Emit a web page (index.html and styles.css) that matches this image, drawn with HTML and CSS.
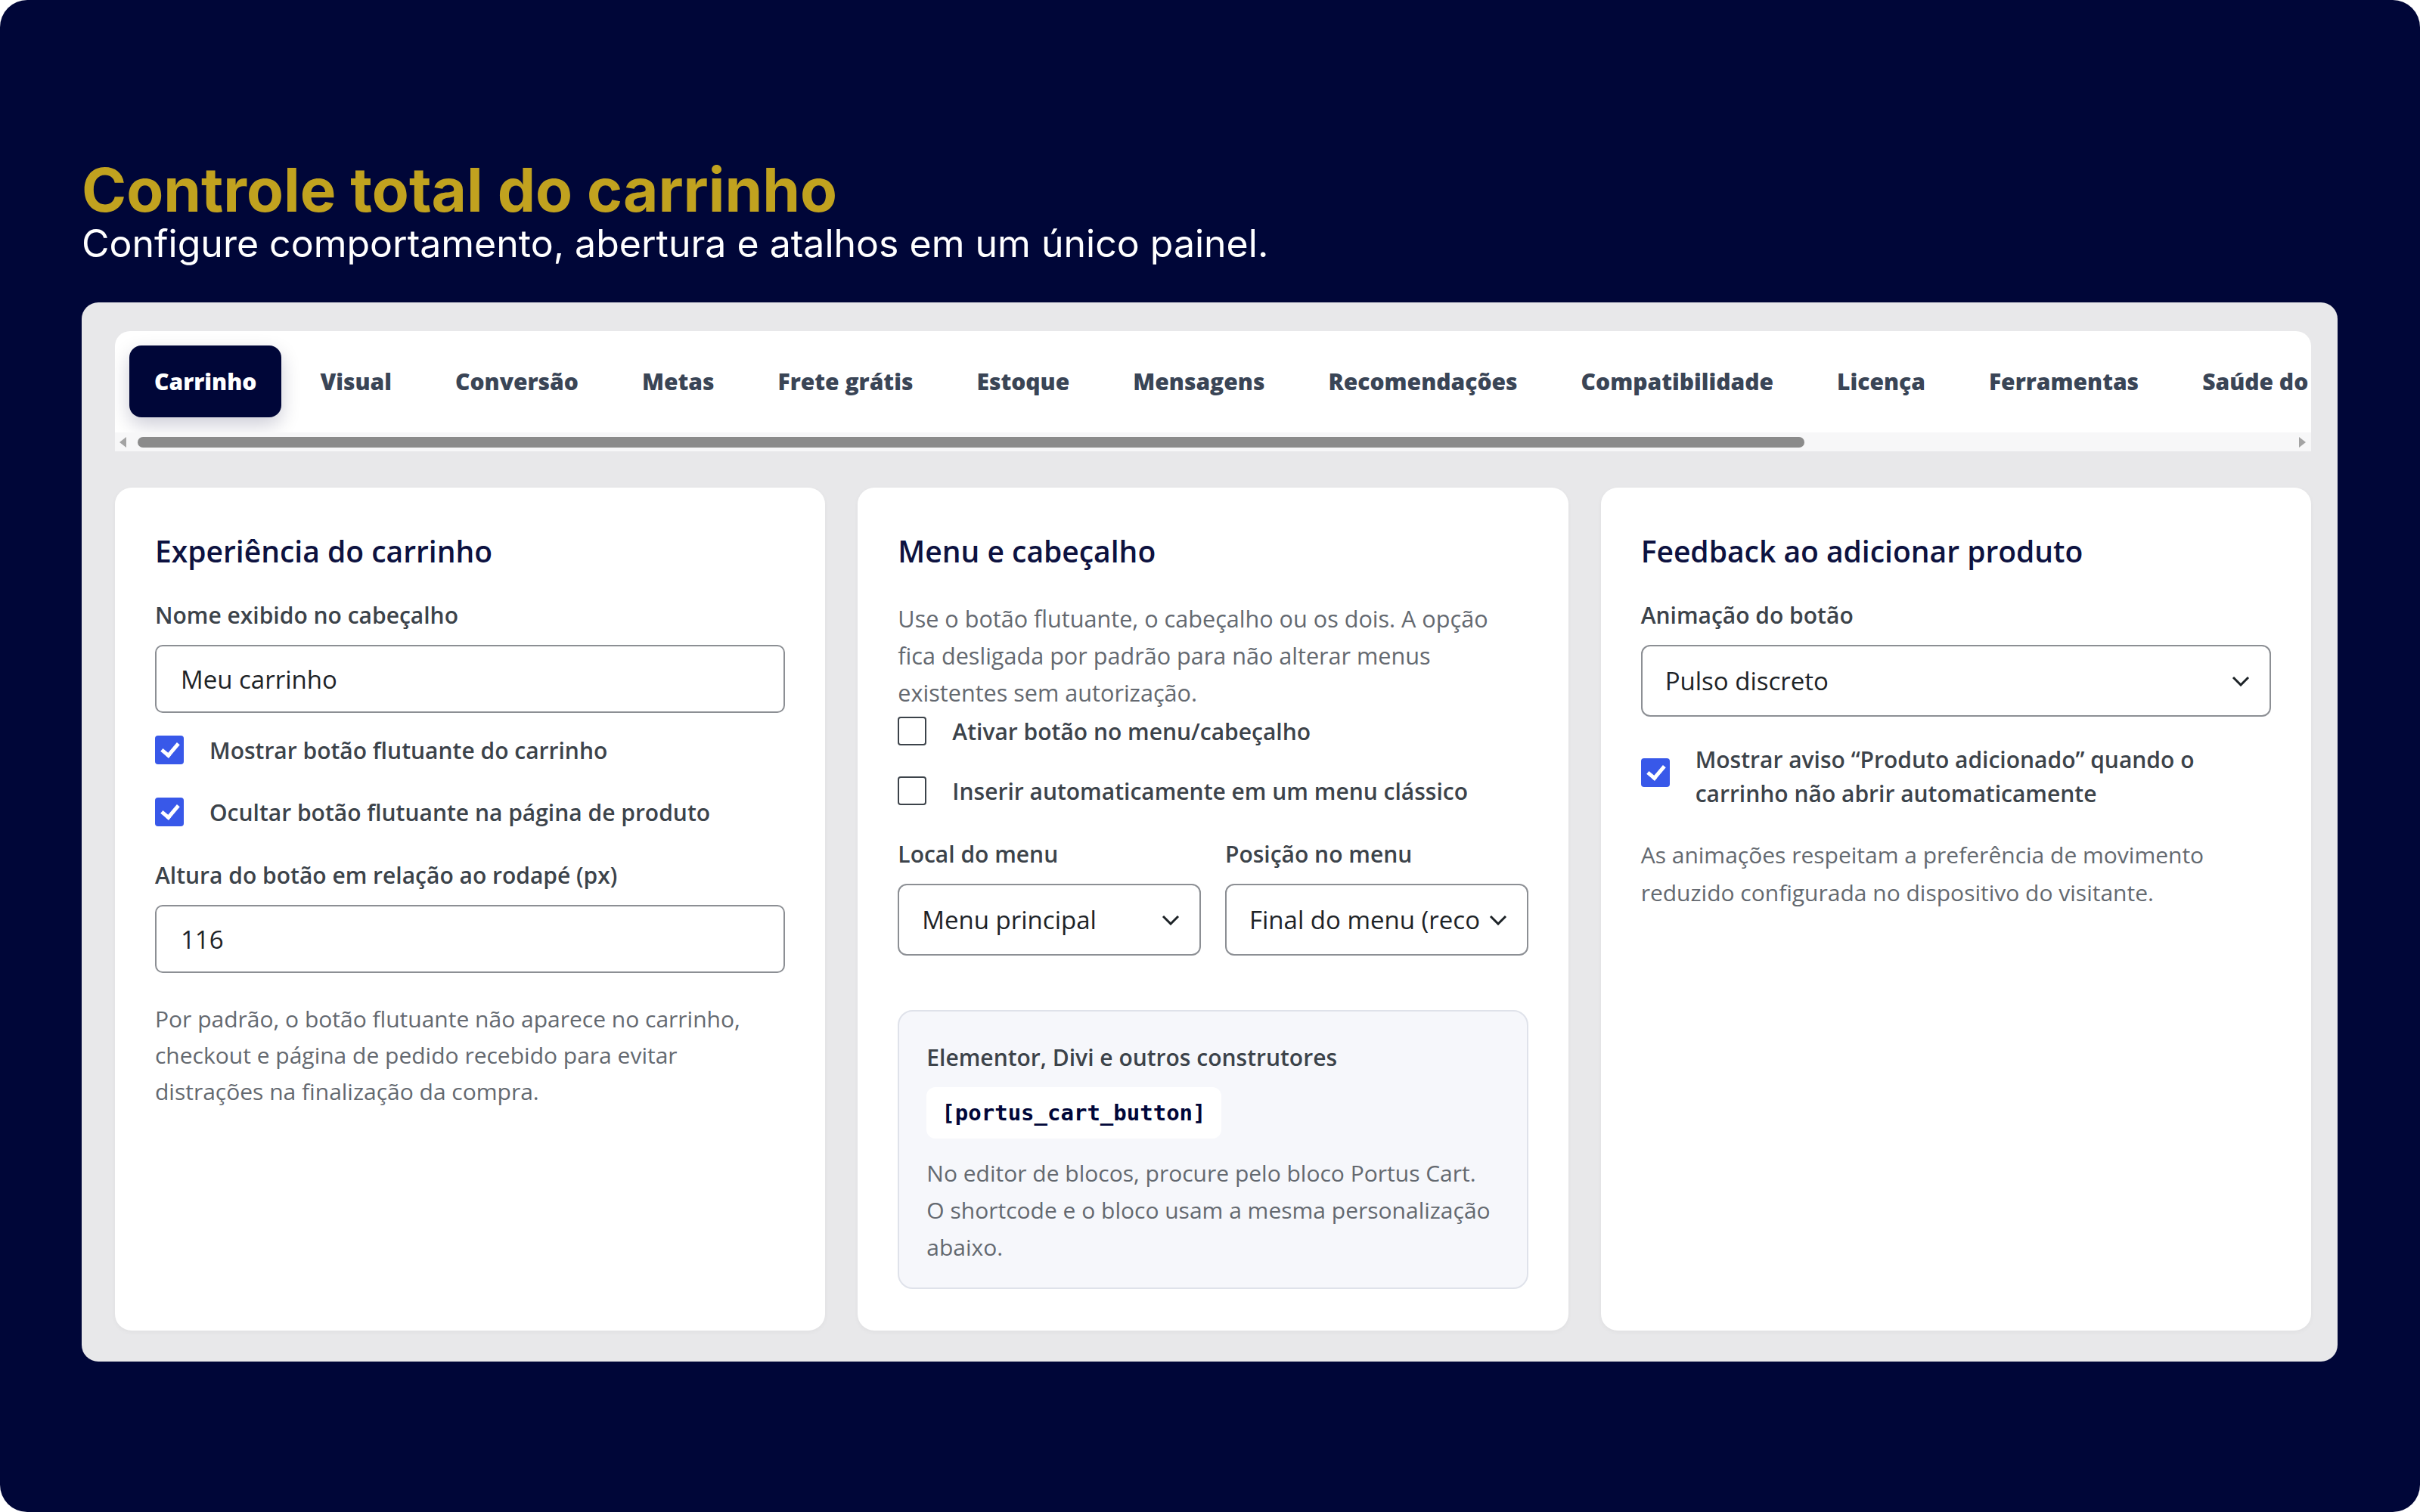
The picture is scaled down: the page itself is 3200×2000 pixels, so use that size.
FILE: index.html
```html
<!DOCTYPE html>
<html lang="pt-BR">
  <head>
    <meta charset="UTF-8" />
    <meta name="viewport" content="width=device-width, initial-scale=1.0" />
    <title>Portus Cart - Carrinho</title>
    <link rel="stylesheet" href="styles.css">
  </head>
  <body>
    <div class="frame">
      <header class="hero">
        <h1>Controle total do carrinho</h1>
        <p>Configure comportamento, abertura e atalhos em um único painel.</p>
      </header>

      <section class="panel">
        <!-- Abas de navegação -->
        <nav class="tabs">
          <div class="tab-list">
            <a class="tab active">Carrinho</a>
            <a class="tab">Visual</a>
            <a class="tab">Conversão</a>
            <a class="tab">Metas</a>
            <a class="tab">Frete grátis</a>
            <a class="tab">Estoque</a>
            <a class="tab">Mensagens</a>
            <a class="tab">Recomendações</a>
            <a class="tab">Compatibilidade</a>
            <a class="tab">Licença</a>
            <a class="tab">Ferramentas</a>
            <a class="tab">Saúde do</a>
          </div>
          <div class="scrollbar">
            <span class="arrow arrow-left"></span>
            <div class="track"><div class="thumb"></div></div>
            <span class="arrow arrow-right"></span>
          </div>
        </nav>

        <div class="cards">
          <div class="card">
            <h2>Experiência do carrinho</h2>
            <label class="field-label">Nome exibido no cabeçalho</label>
            <div class="input">Meu carrinho</div>

            <div class="checks">
              <label class="check">
                <span class="box checked"></span>
                <span>Mostrar botão flutuante do carrinho</span>
              </label>
              <label class="check">
                <span class="box checked"></span>
                <span>Ocultar botão flutuante na página de produto</span>
              </label>
            </div>

            <label class="field-label spaced">Altura do botão em relação ao rodapé (px)</label>
            <div class="input">116</div>

            <p class="help">Por padrão, o botão flutuante não aparece no carrinho, checkout e página de pedido recebido para evitar distrações na finalização da compra.</p>
          </div>

          <div class="card">
            <h2>Menu e cabeçalho</h2>
            <p class="help desc">Use o botão flutuante, o cabeçalho ou os dois. A opção fica desligada por padrão para não alterar menus existentes sem autorização.</p>

            <div class="checks tight">
              <label class="check">
                <span class="box"></span>
                <span>Ativar botão no menu/cabeçalho</span>
              </label>
              <label class="check">
                <span class="box"></span>
                <span>Inserir automaticamente em um menu clássico</span>
              </label>
            </div>

            <div class="two-cols">
              <div>
                <label class="field-label">Local do menu</label>
                <div class="select">
                  <span class="select-value">Menu principal</span>
                  <svg width="24" height="14" viewBox="0 0 24 14"><path d="M2 2l10 10L22 2" fill="none" stroke="#1d2327" stroke-width="3"/></svg>
                </div>
              </div>
              <div>
                <label class="field-label">Posição no menu</label>
                <div class="select">
                  <span class="select-value">Final do menu (recomendado)</span>
                  <svg width="24" height="14" viewBox="0 0 24 14"><path d="M2 2l10 10L22 2" fill="none" stroke="#1d2327" stroke-width="3"/></svg>
                </div>
              </div>
            </div>

            <div class="builder">
              <p class="builder-title">Elementor, Divi e outros construtores</p>
              <code class="shortcode">[portus_cart_button]</code>
              <p class="help">No editor de blocos, procure pelo bloco Portus Cart. O shortcode e o bloco usam a mesma personalização abaixo.</p>
            </div>
          </div>

          <div class="card">
            <h2>Feedback ao adicionar produto</h2>
            <label class="field-label">Animação do botão</label>
            <div class="select">
              <span class="select-value">Pulso discreto</span>
              <svg width="24" height="14" viewBox="0 0 24 14"><path d="M2 2l10 10L22 2" fill="none" stroke="#1d2327" stroke-width="3"/></svg>
            </div>

            <div class="checks multi">
              <label class="check">
                <span class="box checked"></span>
                <span>Mostrar aviso “Produto adicionado” quando o carrinho não abrir automaticamente</span>
              </label>
            </div>

            <p class="help">As animações respeitam a preferência de movimento reduzido configurada no dispositivo do visitante.</p>
          </div>
        </div>
      </section>
    </div>
  </body>
</html>
```

FILE: styles.css
```css
body {
  margin: 0;
  background-color: #ffffff;
  font-family: "Open Sans", "Noto Sans", sans-serif;
}

.frame {
  height: 2000px;
  box-sizing: border-box;
  padding: 207px 109px 0 108px;
  background-color: #000638;
  border-radius: 36px;
}

/* Cabeçalho */
.hero h1 {
  margin: 0;
  font-family: Inter, sans-serif;
  font-size: 80px;
  line-height: 88px;
  font-weight: 700;
  color: #c1a21f;
}

.hero p {
  margin: -3px 0 48px;
  font-family: Inter, sans-serif;
  font-size: 50px;
  line-height: 60px;
  color: #ffffff;
}

/* Painel */
.panel {
  background-color: #e8e8ea;
  border-radius: 22px;
  padding: 38px 35px 41px 44px;
}

.tabs {
  background-color: #ffffff;
  border-radius: 20px 20px 0 0;
  overflow: hidden;
}

.tab-list {
  display: flex;
  gap: 18px;
  padding: 19px 0 20px 19px;
  overflow: hidden;
  white-space: nowrap;
}

.tab {
  flex-shrink: 0;
  display: flex;
  align-items: center;
  height: 95px;
  padding: 0 33px;
  border-radius: 16px;
  font-size: 30px;
  font-weight: 800;
  color: #3a4556;
}

.tab.active {
  background-color: #000638;
  color: #ffffff;
  box-shadow: 0 10px 26px rgba(0, 6, 56, 0.2);
}

.scrollbar {
  display: flex;
  align-items: center;
  height: 25px;
  padding: 0 7px 0 6px;
  background-color: #f7f7f8;
}

.arrow {
  width: 0;
  height: 0;
  border-top: 7px solid transparent;
  border-bottom: 7px solid transparent;
}

.arrow-left {
  border-right: 9px solid #a3a3a3;
}

.arrow-right {
  border-left: 9px solid #a3a3a3;
}

.track {
  flex: 1;
  padding: 0 11px 0 15px;
}

.thumb {
  width: 2204px;
  height: 14px;
  border-radius: 7px;
  background-color: #8b8b8b;
}

/* Cartões */
.cards {
  display: grid;
  grid-template-columns: repeat(3, minmax(0, 1fr));
  gap: 43px;
  margin-top: 48px;
}

.card {
  background-color: #ffffff;
  border-radius: 22px;
  padding: 60px 53px 55px;
  box-shadow: 0 2px 6px rgba(0, 0, 0, 0.04);
}

.card h2 {
  margin: 0 0 41px;
  font-size: 39px;
  line-height: 48px;
  font-weight: 600;
  color: #0d1240;
}

.field-label {
  display: block;
  margin-bottom: 19px;
  font-size: 30px;
  line-height: 40px;
  font-weight: 600;
  color: #3c434a;
}

.field-label.spaced {
  margin-top: 41px;
}

.input,
.select {
  box-sizing: border-box;
  display: flex;
  align-items: center;
  height: 90px;
  padding: 0 32px;
  border: 2px solid #8c8f94;
  border-radius: 10px;
  font-size: 33px;
  color: #1d2327;
}

.select {
  height: 95px;
  gap: 10px;
  padding: 0 26px 0 30px;
  border-radius: 12px;
}

.select-value {
  flex: 1;
  overflow: hidden;
  white-space: nowrap;
}

.select svg {
  flex-shrink: 0;
}

.checks {
  display: flex;
  flex-direction: column;
  gap: 36px;
  margin-top: 26px;
}

.checks.tight {
  gap: 33px;
  margin-top: 3px;
}

.checks.multi {
  margin-top: 34px;
}

.check {
  display: flex;
  align-items: center;
  gap: 34px;
  min-height: 46px;
  font-size: 30px;
  line-height: 45px;
  font-weight: 600;
  color: #3c434a;
}

.checks.multi .check {
  align-items: flex-start;
}

.checks.multi .box {
  margin-top: 21px;
}

.box {
  flex-shrink: 0;
  box-sizing: border-box;
  width: 38px;
  height: 38px;
  border: 2px solid #3c434a;
  border-radius: 4px;
  background-color: #ffffff;
}

.box.checked {
  position: relative;
  border: none;
  background-color: #3858e9;
}

.box.checked::after {
  content: "";
  position: absolute;
  left: 13px;
  top: 5px;
  width: 9px;
  height: 18px;
  border: solid #ffffff;
  border-width: 0 5px 5px 0;
  transform: rotate(40deg);
}

.help {
  margin: 37px 0 0;
  font-size: 30px;
  line-height: 48px;
  color: #646970;
}

.help.desc {
  margin-top: 0;
  font-size: 30.6px;
  line-height: 49px;
}

.checks.multi + .help {
  margin-top: 34px;
  line-height: 50px;
}

.two-cols {
  display: grid;
  grid-template-columns: minmax(0, 1fr) minmax(0, 1fr);
  gap: 32px;
  margin-top: 41px;
}

.builder {
  margin-top: 72px;
  padding: 41px 36px 29px;
  background-color: #f6f7fb;
  border: 2px solid #dfe2ea;
  border-radius: 20px;
}

.builder-title {
  margin: 0;
  font-size: 30px;
  line-height: 40px;
  font-weight: 600;
  color: #3c434a;
}

.shortcode {
  display: inline-block;
  margin-top: 19px;
  padding: 0 20px;
  height: 68px;
  line-height: 68px;
  border-radius: 12px;
  background-color: #ffffff;
  font-family: "DejaVu Sans Mono", "Liberation Mono", monospace;
  font-size: 29px;
  font-weight: 700;
  color: #000638;
}

.builder .help {
  margin-top: 21px;
  line-height: 49px;
}
```
